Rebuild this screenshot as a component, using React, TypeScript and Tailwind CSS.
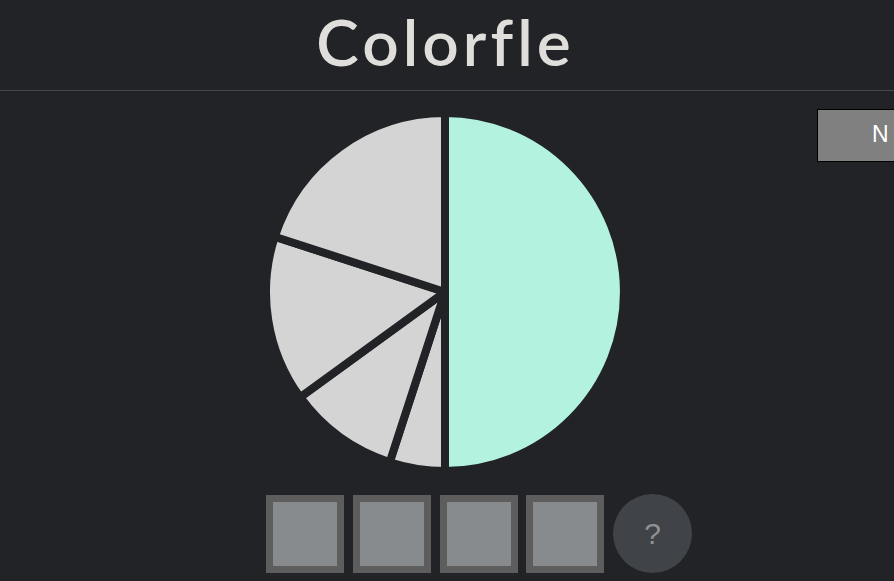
import React from "react";

const C = 183;
const R = 179;

function slicePath(startFrac: number, endFrac: number) {
  const a0 = startFrac * Math.PI * 2 - Math.PI / 2;
  const a1 = endFrac * Math.PI * 2 - Math.PI / 2;
  const x0 = C + R * Math.cos(a0);
  const y0 = C + R * Math.sin(a0);
  const x1 = C + R * Math.cos(a1);
  const y1 = C + R * Math.sin(a1);
  const large = endFrac - startFrac > 0.5 ? 1 : 0;
  return `M ${C} ${C} L ${x0} ${y0} A ${R} ${R} 0 ${large} 1 ${x1} ${y1} Z`;
}

const slices = [
  { frac: 0.5, color: "#b4f2e0" },
  { frac: 0.05, color: "#d4d4d4" },
  { frac: 0.1, color: "#d4d4d4" },
  { frac: 0.15, color: "#d4d4d4" },
  { frac: 0.2, color: "#d4d4d4" },
];

function Pie() {
  let acc = 0;
  return (
    <svg width={366} height={366} viewBox="0 0 366 366">
      {slices.map((s, i) => {
        const d = slicePath(acc, acc + s.frac);
        acc += s.frac;
        return (
          <path
            key={i}
            d={d}
            fill={s.color}
            stroke="#222326"
            strokeWidth={8}
            strokeLinejoin="round"
          />
        );
      })}
    </svg>
  );
}

function Tile() {
  return (
    <div className="w-[78px] h-[78px] border-[7px] border-[#5d5d5d] bg-[#888b8e]" />
  );
}

export default function App() {
  return (
    <div className="relative w-[894px] h-[581px] overflow-hidden bg-[#222326] font-['Lato',sans-serif]">
      <header className="h-[91px] border-b border-[#464749] flex justify-center items-center">
        <h1 className="text-[64px] leading-none font-semibold text-[#dfdedb] tracking-[4px] pr-[3px] pb-[6px] font-['Lato',sans-serif]">
          Colorfle
        </h1>
      </header>
      <button className="absolute left-[817px] top-[109px] w-[160px] h-[53px] bg-[#808080] border border-black text-white text-left pl-[54px] pb-[3px] text-[23px] tracking-[7px] whitespace-nowrap font-['Liberation_Sans',Arial,sans-serif]">
        New Game
      </button>
      <div className="flex justify-center pr-[4px] mt-[18px]">
        <Pie />
      </div>
      <div className="flex items-center gap-[8.75px] pl-[266px] mt-[19px]">
        <Tile />
        <Tile />
        <Tile />
        <Tile />
        <div className="w-[79px] h-[79px] rounded-full bg-[#404347] flex items-center justify-center text-[#8f9295] text-[30px] font-['Liberation_Sans',Arial,sans-serif]">
          ?
        </div>
      </div>
    </div>
  );
}
